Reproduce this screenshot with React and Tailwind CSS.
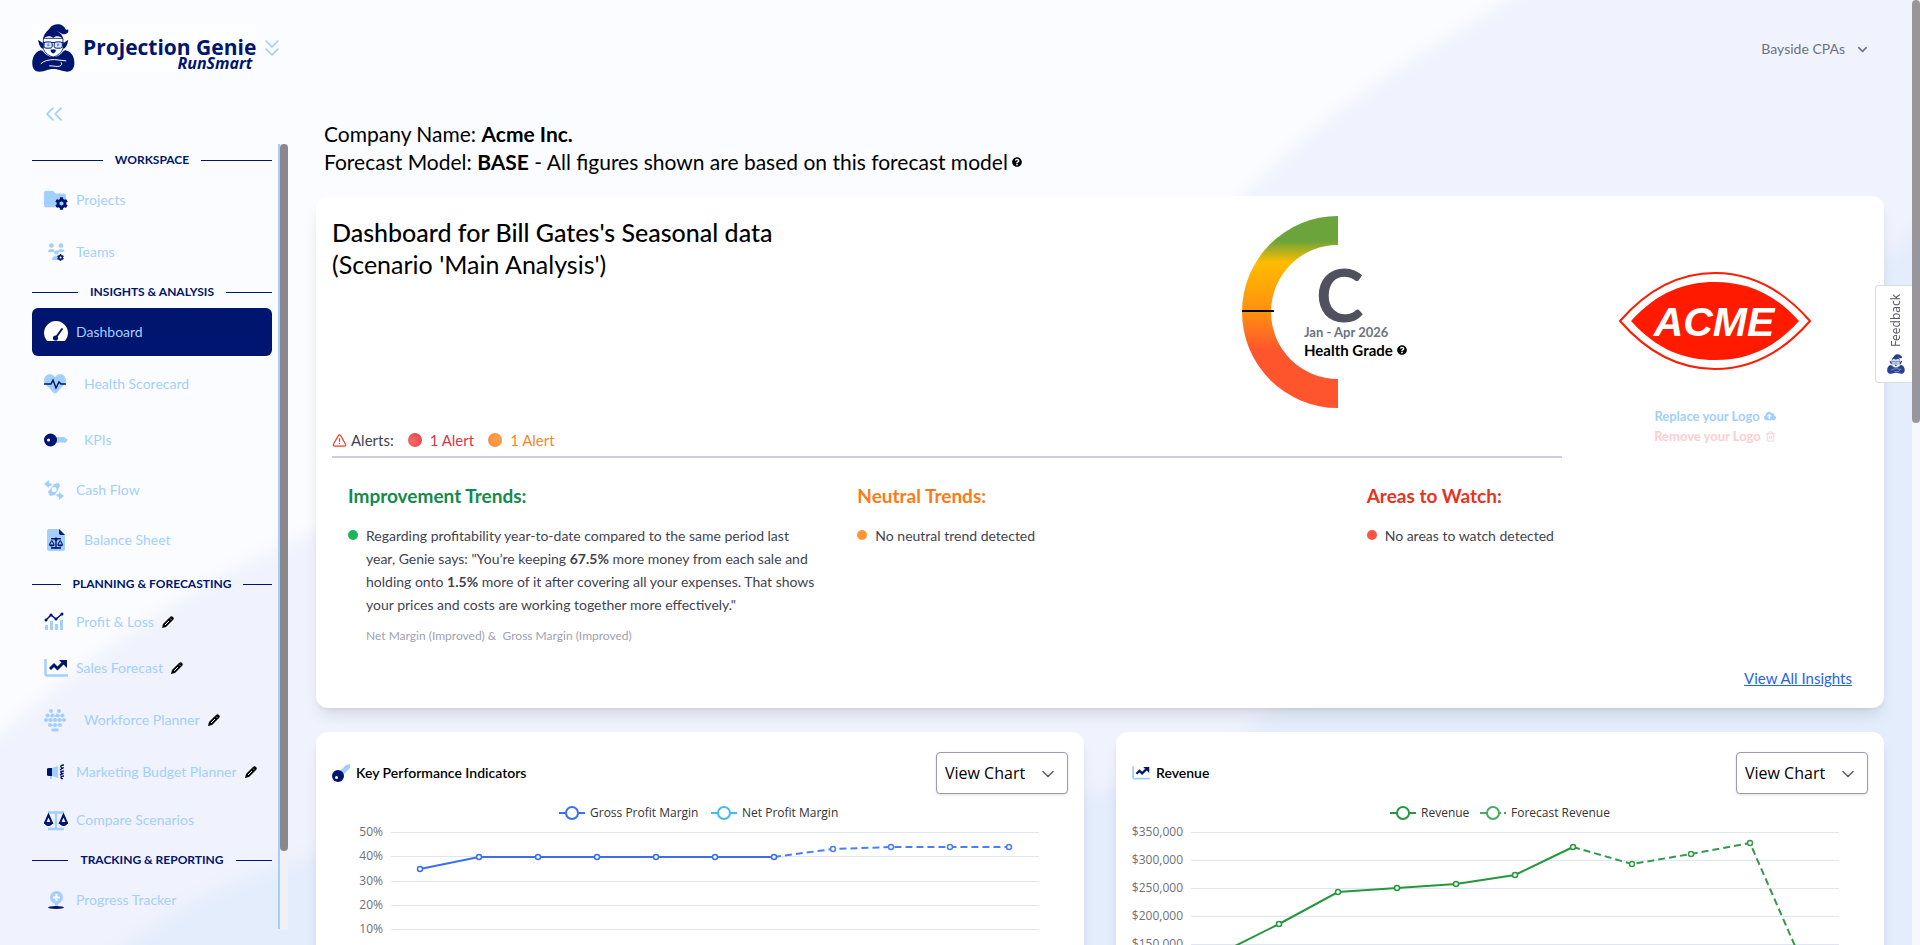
import React, { useState } from 'react';
import { FaFolder, FaCog, FaHeart, FaBalanceScale, FaQuestionCircle, FaCloudUploadAlt } from 'react-icons/fa';
import { ChevronsDown, ChevronsLeft, ChevronDown, TriangleAlert, Trash2 } from 'lucide-react';

const NAVY = '#00156f';
const SKY = '#a3cffe';

function Genie({ className, color = NAVY }) {
  return (
    <svg viewBox="24 22 130 147" className={className} fill={color} aria-hidden="true">
      <path d="M42 70L58 82V98C49 96 44 86 42 70ZM134 70L118 82V98C127 96 132 86 134 70Z" />
      <path
        d="M58 66H118V98C112 112 102 120 88 123C74 120 64 112 58 98Z"
        fill="#fff"
        stroke={color}
        strokeWidth="2.500"
      />
      <path d="M57 70C58 52 70 44 78 34C86 22 106 20 117 27C127 33 123 41 134 39C138 49 124 57 115 52C108 49 106 45 100 44C112 50 118 58 119 70C112 58 96 56 88 65C80 56 64 58 57 70Z" />
      <path d="M56 77H120V80H56Z" />
      <rect x="60" y="77" width="25" height="19" rx="6" fill="#dcebfd" stroke={color} strokeWidth="3" />
      <rect x="91" y="77" width="25" height="19" rx="6" fill="#dcebfd" stroke={color} strokeWidth="3" />
      <circle cx="73" cy="86" r="4" fill="#5c9df0" />
      <circle cx="103" cy="86" r="4" fill="#5c9df0" />
      <path d="M80 101Q88 97 96 101Q97 109 88 112Q79 109 80 101Z" />
      <path d="M48 103C56 100 60 112 70 118C80 125 96 125 106 118C116 112 120 100 128 103C146 108 153 124 153 142C153 158 144 168 130 168C112 166 104 160 88 160C72 160 64 168 46 168C32 168 24 158 24 142C24 124 32 108 48 103Z" />
      <path d="M50 144C60 134 76 131 92 131L128 135M76 150C92 150 100 154 108 151C114 149 116 144 112 139" fill="none" stroke="#fff" strokeWidth="3" />
    </svg>
  );
}

function Logo() {
  return (
    <div className="flex h-12 w-56 items-center gap-2 bg-white/60">
      <Genie className="h-12 w-[43px] shrink-0" />
      <div className="flex flex-col pt-3 text-[#00156f]" style={{ fontFamily: '"Open Sans", sans-serif' }}>
        <span className="whitespace-nowrap text-[21px] font-bold leading-6">Projection Genie</span>
        <span className="-mt-1.5 self-end pr-1 text-base font-bold italic leading-5">RunSmart</span>
      </div>
    </div>
  );
}

const icons = {
  projects: (
    <>
      <FaFolder x="0" y="0" size={22} color={SKY} />
      <FaCog x="11" y="9" size={13} color={NAVY} />
    </>
  ),
  teams: (
    <>
      <g fill={SKY}>
        <circle cx="7.500" cy="5.500" r="2.300" />
        <circle cx="17" cy="5.500" r="2.300" />
        <path d="M4 12Q4 9 7.500 9T10 12ZM14 12Q14 9 17 9T20.500 12Z" />
        <circle cx="12.500" cy="12.500" r="2.300" />
        <path d="M8 20Q8 16 12 16H16V20Z" />
      </g>
      <FaCog x="13" y="14" size={7} color={NAVY} />
    </>
  ),
  dashboard: (
    <>
      <path d="M3 21A12 12 0 1 1 21 21Z" fill="#fff" />
      <path d="M11.500 18L18 9" stroke={NAVY} strokeWidth="2" strokeLinecap="round" />
      <circle cx="11.500" cy="18" r="2.600" fill={NAVY} />
    </>
  ),
  health: (
    <>
      <FaHeart x="0" y="1" size={22} color={SKY} />
      <path d="M0 12H7L9 8L12 16L15 10L17 12H22" fill="none" stroke={NAVY} strokeWidth="1.500" />
    </>
  ),
  kpi: (
    <>
      <path d="M10 9H20L24 12L21 15H20L19 14L18 15L17 14L16 15L15 14L14 15H10Z" fill={SKY} />
      <circle cx="6.500" cy="12" r="6.500" fill={NAVY} />
      <circle cx="4.500" cy="12" r="1.500" fill="#fff" />
    </>
  ),
  cash: (
    <g fill={SKY}>
      <path d="M0 6L5 2V5L8 6L7 8H5V10Z" />
      <path d="M20 18L15 22V19L12 18L13 16H15V14Z" />
      <path d="M10 6L15 5L16 8L11 17L6 18L4 14Z" />
      <circle cx="10" cy="11.500" r="2.500" fill="#fbfcff" />
    </g>
  ),
  balance: (
    <>
      <path d="M3 3Q3 1 5 1H15L21 7V21Q21 23 19 23H5Q3 23 3 21Z" fill={SKY} />
      <path d="M15 1L21 7H17Q15 7 15 5Z" fill={NAVY} />
      <FaBalanceScale x="5" y="8" size={14} color={NAVY} />
      <path d="M7 20H17" stroke={NAVY} strokeWidth="1.200" />
    </>
  ),
  profit: (
    <>
      <path d="M1 15H4V20H1ZM6 11H9V20H6ZM11 14H14V20H11ZM16 10H19V20H16Z" fill={SKY} />
      <path d="M2 10L7 5L12 9L18 4" fill="none" stroke={NAVY} strokeWidth="1.500" />
      <g fill={NAVY}>
        <circle cx="2" cy="10" r="1.500" />
        <circle cx="7" cy="5" r="1.500" />
        <circle cx="12" cy="9" r="1.500" />
        <circle cx="18" cy="4" r="1.500" />
      </g>
    </>
  ),
  sales: (
    <>
      <path d="M1.500 3V18Q1.500 19.500 3 19.500H24" fill="none" stroke={SKY} strokeWidth="2.500" />
      <path d="M6 13L10 9L13.500 12.500L20 6" fill="none" stroke={NAVY} strokeWidth="3" />
      <path d="M15 4H23V12Z" fill={NAVY} />
    </>
  ),
  workforce: (
    <g fill={SKY}>
      <path d="M2 12H20M5 8H17M5 17H17" stroke={SKY} strokeWidth="1" />
      <circle cx="7" cy="3" r="2" /><circle cx="15" cy="3" r="2" />
      <circle cx="3.500" cy="7.500" r="2" /><circle cx="8.500" cy="7.500" r="2" /><circle cx="13.500" cy="7.500" r="2" /><circle cx="18.500" cy="7.500" r="2" />
      <circle cx="2" cy="12" r="2" /><circle cx="6.500" cy="12" r="2" /><circle cx="11" cy="12" r="2" /><circle cx="15.500" cy="12" r="2" /><circle cx="20" cy="12" r="2" />
      <circle cx="6" cy="17" r="2" /><circle cx="11" cy="17" r="2" /><circle cx="16" cy="17" r="2" />
      <rect x="7.500" y="20.500" width="7" height="3" rx="1" />
    </g>
  ),
  marketing: (
    <>
      <path d="M3 9Q3 8 5 8H8V16H5Q3 16 3 15Z" fill={NAVY} />
      <path d="M8 8L14 6V18L8 16ZM6 16H8V19H6Z" fill={SKY} />
      <path d="M20 5Q16 5 17 7T19 8T16 10M20 11Q16 11 17 12.500T19 13.500T16 15M20 16Q17 16 17 17.500T19 18.500" fill="none" stroke={NAVY} strokeWidth="1.400" />
    </>
  ),
  compare: (
    <>
      <path d="M4 4.500H20M12 3V21M4 21H20" fill="none" stroke={SKY} strokeWidth="2.400" />
      <path d="M4.500 7L1 15H8ZM19.500 7L16 15H23Z" fill="none" stroke={NAVY} strokeWidth="2" />
      <path d="M0 14H9Q8 18 4.500 18T0 14ZM15 14H24Q23 18 19.500 18T15 14Z" fill={NAVY} />
    </>
  ),
  progress: (
    <>
      <circle cx="12.500" cy="9.500" r="6.500" fill={SKY} />
      <path d="M12.500 6V13M9 9.500H16" stroke="#fff" strokeWidth="2" />
      <path d="M12.500 15V19" stroke={SKY} strokeWidth="3" />
      <ellipse cx="12" cy="19.500" rx="8" ry="1.500" fill={NAVY} />
    </>
  ),
};

function NavIcon({ name }) {
  return (
    <svg viewBox="0 0 24 24" className="h-6 w-6 shrink-0" aria-hidden="true">
      {icons[name]}
    </svg>
  );
}

function Pencil() {
  return (
    <svg viewBox="0 0 12 12" className="h-3 w-3 shrink-0" aria-hidden="true">
      <path d="M0 12L1 8L8 1Q9.500 -.5 11 1T11 4L4 11Z" fill="#000" />
      <path d="M3 9L7 5" stroke="#fff" strokeWidth="1" />
      <path d="M8 2.500L9.500 4" stroke="#fff" strokeWidth=".6" />
    </svg>
  );
}

function SectionTitle({ children, className }) {
  return (
    <div className={'flex shrink-0 items-center text-xs font-bold text-[#00156f] ' + className}>
      <span className="h-px grow bg-[#00156f]" />
      <h2 className="px-3 uppercase">{children}</h2>
      <span className="h-px grow bg-[#00156f]" />
    </div>
  );
}

function NavItem({ icon, label, className, active, indent, editable }) {
  return (
    <a
      href="#"
      className={
        'flex shrink-0 items-center gap-2 whitespace-nowrap rounded-md pl-3 text-sm text-[#a3cffe] ' +
        (active ? 'bg-[#00156f] ' : '') +
        className
      }
    >
      <NavIcon name={icon} />
      <span className={indent ? 'pl-2' : ''}>{label}</span>
      {editable && <Pencil />}
    </a>
  );
}

function Sidebar() {
  return (
    <aside className="flex w-64 shrink-0 flex-col">
      <button type="button" aria-label="Collapse menu" className="mb-4 ml-2 w-7 text-[#a3cffe]">
        <ChevronsLeft size={28} strokeWidth={1.5} />
      </button>
      <div className="flex min-h-0 grow">
        <nav className="flex min-w-0 grow flex-col overflow-hidden pr-1.5">
          <SectionTitle className="h-8">Workspace</SectionTitle>
          <NavItem icon="projects" label="Projects" className="h-12" />
          <NavItem icon="teams" label="Teams" className="h-14" />
          <SectionTitle className="h-7 pb-1">Insights &amp; Analysis</SectionTitle>
          <NavItem icon="dashboard" label="Dashboard" className="h-12" active />
          <NavItem icon="health" label="Health Scorecard" className="h-14" indent />
          <NavItem icon="kpi" label="KPIs" className="h-14" indent />
          <NavItem icon="cash" label="Cash Flow" className="h-11" />
          <NavItem icon="balance" label="Balance Sheet" className="h-14" indent />
          <SectionTitle className="h-8">Planning &amp; Forecasting</SectionTitle>
          <NavItem icon="profit" label="Profit & Loss" className="h-11" editable />
          <NavItem icon="sales" label="Sales Forecast" className="h-12" editable />
          <NavItem icon="workforce" label="Workforce Planner" className="h-14" indent editable />
          <NavItem icon="marketing" label="Marketing Budget Planner" className="h-12" editable />
          <NavItem icon="compare" label="Compare Scenarios" className="h-12" />
          <SectionTitle className="h-8">Tracking &amp; Reporting</SectionTitle>
          <NavItem icon="progress" label="Progress Tracker" className="h-12" />
        </nav>
        <div className="w-2.5 shrink-0 border-l-2 border-[#a3cffe] bg-[#f1f0f4]">
          <div className="h-[90%] rounded-full bg-[#8a888c]" />
        </div>
      </div>
    </aside>
  );
}

function HealthGauge() {
  return (
    <div className="relative h-48 w-80 shrink-0">
      <svg viewBox="0 0 96 192" className="h-48 w-24" aria-hidden="true">
        <defs>
          <linearGradient id="grade" x1="0" y1="0" x2="0" y2="1">
            <stop offset="0.130" stopColor="#6ba43a" />
            <stop offset="0.240" stopColor="#ffbc00" />
            <stop offset="0.500" stopColor="#ff9010" />
            <stop offset="0.700" stopColor="#ff552d" />
          </linearGradient>
        </defs>
        <path d="M96 0A96 96 0 0 0 96 192V163A67 67 0 0 1 96 29Z" fill="url(#grade)" />
        <path d="M0 95H32" stroke="#000" strokeWidth="2" />
      </svg>
      <div className="absolute left-[62px] top-12 flex flex-col">
        <span className="pl-3 text-7xl font-bold leading-[60px] text-[#50505f]">C</span>
        <span className="text-[13px] font-bold leading-4 text-[#6b7280]">Jan - Apr 2026</span>
        <span className="flex items-center gap-1 text-[15px] font-bold leading-5 text-black">
          Health Grade <FaQuestionCircle size={10} />
        </span>
      </div>
    </div>
  );
}

function AcmeLogo() {
  return (
    <svg viewBox="0 0 192 98" className="h-[98px] w-48" role="img" aria-label="Acme">
      <path d="M1 49C28 18 60 1 96 1S164 18 191 49C164 80 132 97 96 97S28 80 1 49Z" fill="#fff" stroke="#ff1a00" strokeWidth="2" />
      <path d="M12 49C38 20 66 10 96 10S154 20 180 49C154 78 126 88 96 88S38 78 12 49Z" fill="#ff1a00" />
      <text x="95" y="64" textAnchor="middle" fill="#fff" fontSize="41" fontWeight="700" fontStyle="italic" fontFamily='"Liberation Sans", sans-serif'>
        ACME
      </text>
    </svg>
  );
}

function Trend({ title, titleClass, dotClass, children }) {
  return (
    <section>
      <h3 className={'text-[19px] font-bold leading-7 ' + titleClass}>{title}</h3>
      <div className="mt-3.5 flex gap-2">
        <span className={'mt-1.5 h-2.5 w-2.5 shrink-0 rounded-full ' + dotClass} />
        <div className="max-w-[453px] text-sm leading-[23px] text-[#3f4350]">{children}</div>
      </div>
    </section>
  );
}

function Summary() {
  return (
    <section className="rounded-xl bg-white p-4 shadow-lg">
      <div className="flex">
        <div className="flex h-[246px] min-w-0 grow flex-col justify-between border-b-2 border-[#d0cede]">
          <div className="flex justify-between pt-1">
            <h1 className="text-[25px] leading-8 text-black">
              <span className="font-medium">Dashboard for Bill Gates's Seasonal data</span>
              <br />
              (Scenario 'Main Analysis')
            </h1>
            <HealthGauge />
          </div>
          <div className="flex items-center pb-1 text-[15px] leading-6 text-[#3f4350]">
            <TriangleAlert size={15} color="#ef3b24" />
            <span className="pl-1 pr-3.5">Alerts:</span>
            <span className="h-3.5 w-3.5 rounded-full bg-radial-[at_30%_60%] from-[#fa6b62] to-[#d6404f]" />
            <a href="#" className="pl-2 pr-3.5 text-[#dc3545]">1 Alert</a>
            <span className="h-3.5 w-3.5 rounded-full bg-radial-[at_60%_40%] from-[#ffa04a] to-[#f38a3b]" />
            <a href="#" className="pl-2 text-[#f5872b]">1 Alert</a>
          </div>
        </div>
        <div className="flex w-[306px] shrink-0 flex-col items-center pt-15">
          <AcmeLogo />
          <button type="button" className="mt-9 flex items-center gap-1 text-[13px] font-bold leading-5 text-[#a3cffe]">
            Replace your Logo <FaCloudUploadAlt size={12} />
          </button>
          <button type="button" className="flex items-center gap-1 text-[13px] font-bold leading-5 text-[#fecdd0]">
            Remove your Logo <Trash2 size={11} />
          </button>
        </div>
      </div>
      <div className="grid grid-cols-3 gap-6 px-4 pt-6">
        <Trend title="Improvement Trends:" titleClass="text-[#128a4b]" dotClass="bg-[#1bb35c]">
          <p>
            Regarding profitability year-to-date compared to the same period last year, Genie says: "You’re keeping{' '}
            <b>67.5%</b> more money from each sale and holding onto <b>1.5%</b> more of it after covering all your
            expenses. That shows your prices and costs are working together more effectively."
          </p>
          <p className="mt-2 text-xs leading-6 text-[#a09fb4]">Net Margin (Improved) &amp;&nbsp; Gross Margin (Improved)</p>
        </Trend>
        <Trend title="Neutral Trends:" titleClass="text-[#fb7c17]" dotClass="bg-[#ff9634]">
          No neutral trend detected
        </Trend>
        <Trend title="Areas to Watch:" titleClass="text-[#e8321f]" dotClass="bg-[#ff5344]">
          No areas to watch detected
        </Trend>
      </div>
      <div className="flex justify-end px-4 pb-0.5 pt-[18px]">
        <a href="#" className="text-[15px] leading-6 text-[#2563eb] underline">View All Insights</a>
      </div>
    </section>
  );
}

function ChartCard({ id, title, icon, children }) {
  const [view, setView] = useState('chart');
  return (
    <section className="min-w-0 rounded-xl bg-white pt-5 shadow-lg">
      <div className="flex items-center gap-1.5 px-4">
        {icon}
        <label htmlFor={id} className="grow text-sm font-semibold text-black">{title}</label>
        <div className="relative">
          <select
            id={id}
            value={view}
            onChange={(e) => setView(e.target.value)}
            className="h-[42px] w-33 appearance-none rounded border border-[#9c99b0] bg-white pl-2 text-base text-black shadow-sm"
            style={{ fontFamily: '"Open Sans", sans-serif' }}
          >
            <option value="chart">View Chart</option>
            <option value="table">View Table</option>
          </select>
          <ChevronDown size={20} strokeWidth={1.75} className="pointer-events-none absolute right-2.5 top-3 text-[#5b5b66]" />
        </div>
      </div>
      {children}
    </section>
  );
}

function LineChart({ left, labels, step, points, split, color, dashColor, legend }) {
  const path = (list) => list.map((p) => p.join(',')).join(' ');
  return (
    <svg viewBox="0 0 768 240" className="w-full" fontFamily='"Open Sans", sans-serif' fontSize="12">
      {legend.map((l) => (
        <g key={l.label}>
          <path d={`M${l.x} 19h26`} stroke={l.color} strokeWidth="2" strokeDasharray={l.dash} />
          <circle cx={l.x + 13} cy="19" r="6" fill="#fff" stroke={l.color} strokeWidth="2" />
          <text x={l.x + 31} y="23" fill="#333">{l.label}</text>
        </g>
      ))}
      {labels.map((label, i) => (
        <g key={label}>
          <text x={left - 8} y={42 + i * step} textAnchor="end" fill="#6e7079">{label}</text>
          <path d={`M${left} ${38.5 + Math.round(i * step)}H723`} stroke="#e0e6f1" />
        </g>
      ))}
      <polyline points={path(points.slice(0, split))} fill="none" stroke={color} strokeWidth="2" />
      <polyline points={path(points.slice(split - 1))} fill="none" stroke={dashColor} strokeWidth="2" strokeDasharray="7 4" />
      {points.map((p, i) => (
        <circle key={i} cx={p[0]} cy={p[1]} r="2.500" fill="#fff" stroke={i < split ? color : dashColor} strokeWidth="1.500" />
      ))}
    </svg>
  );
}

const marginPoints = [
  [104, 75], [163, 63], [222, 63], [281, 63], [340, 63], [399, 63],
  [458, 63], [517, 55], [575, 53], [634, 53], [693, 53],
];

const revenuePoints = [
  [105, 159], [163, 130], [222, 98], [281, 94], [340, 90], [399, 81],
  [457, 53], [516, 70], [575, 60], [634, 49], [693, 184],
];

function Backdrop() {
  return (
    <svg viewBox="0 0 1912 945" preserveAspectRatio="none" className="absolute inset-0 h-full w-full" aria-hidden="true">
      <defs>
        <filter id="soft" x="-10%" y="-10%" width="120%" height="120%">
          <feGaussianBlur stdDeviation="8" />
        </filter>
      </defs>
      <g filter="url(#soft)">
        <path d="M-40 770C120 620 240 560 340 520C800 480 1120 330 1244 190C1330 100 1420 50 1550 -30H1960V1000H-40Z" fill="#f0f3fd" />
        <path d="M60 1000C160 900 270 850 420 840C900 840 1180 800 1250 720C1500 560 1840 300 1960 180V1000Z" fill="#e4edfc" />
      </g>
    </svg>
  );
}

function App() {
  return (
    <div className="relative flex h-screen overflow-hidden bg-[#fbfcff]" style={{ fontFamily: 'Lato, sans-serif' }}>
      <Backdrop />
      <div className="relative flex min-w-0 grow flex-col">
        <header className="flex items-center justify-between px-8 pb-7 pt-6">
          <div className="flex items-center gap-0.5">
            <Logo />
            <button type="button" aria-label="Switch product" className="text-[#a3cffe]">
              <ChevronsDown size={28} strokeWidth={1.5} />
            </button>
          </div>
          <button type="button" className="flex items-center gap-2.5 pr-2.5 pt-0.5 text-sm text-[#6b7280]">
            Bayside CPAs <ChevronDown size={15} strokeWidth={2.5} />
          </button>
        </header>
        <div className="flex min-h-0 grow gap-7 pb-4 pl-8 pr-7">
          <Sidebar />
          <main className="flex min-w-0 grow flex-col">
            <div className="px-2 pb-5 pt-5 text-[21px] leading-7 text-black">
              <p>Company Name: <b>Acme Inc.</b></p>
              <p className="flex items-center gap-1">
                <span>Forecast Model: <b>BASE</b> - All figures shown are based on this forecast model</span>
                <FaQuestionCircle size={10} />
              </p>
            </div>
            <Summary />
            <div className="grid grid-cols-2 gap-8 pt-6">
              <ChartCard
                id="kpi-view"
                title="Key Performance Indicators"
                icon={
                  <svg viewBox="0 0 18 18" className="h-[18px] w-[18px]" aria-hidden="true">
                    <path d="M8 7L14 1L18 0V4L11 11Z" fill={SKY} />
                    <circle cx="6" cy="12" r="6" fill={NAVY} />
                    <circle cx="4.500" cy="13.500" r="1.500" fill="#fff" />
                  </svg>
                }
              >
                <LineChart
                  left={75}
                  labels={['50%', '40%', '30%', '20%', '10%', '0%']}
                  step={24.3}
                  points={marginPoints}
                  split={7}
                  color="#3a6ff0"
                  dashColor="#4c7ef3"
                  legend={[
                    { label: 'Gross Profit Margin', x: 243, color: '#3a6ff0' },
                    { label: 'Net Profit Margin', x: 395, color: '#45b8f7' },
                  ]}
                />
              </ChartCard>
              <ChartCard
                id="revenue-view"
                title="Revenue"
                icon={
                  <svg viewBox="0 0 24 24" className="h-[18px] w-[18px]" aria-hidden="true">
                    {icons.sales}
                  </svg>
                }
              >
                <LineChart
                  left={75}
                  labels={['$350,000', '$300,000', '$250,000', '$200,000', '$150,000', '$100,000']}
                  step={28}
                  points={revenuePoints}
                  split={7}
                  color="#26963f"
                  dashColor="#33994b"
                  legend={[
                    { label: 'Revenue', x: 274, color: '#26963f' },
                    { label: 'Forecast Revenue', x: 364, color: '#4aa960', dash: '21 3' },
                  ]}
                />
              </ChartCard>
            </div>
          </main>
        </div>
      </div>
      <div className="relative w-2 shrink-0 bg-[#f6f8fc]">
        <div className="h-[423px] rounded-full bg-[#98969b]" />
        <a
          href="#"
          className="absolute right-2 top-[285px] flex h-[98px] w-[37px] flex-col items-center justify-between rounded-l border border-r-0 border-[#d8dce6] bg-white py-2 pl-1 text-[#55555f]"
          style={{ fontFamily: '"Open Sans", sans-serif' }}
        >
          <span className="rotate-180 text-xs [writing-mode:vertical-rl]">Feedback</span>
          <Genie className="h-5 w-5" color="#26418f" />
        </a>
      </div>
    </div>
  );
}

export default App;
